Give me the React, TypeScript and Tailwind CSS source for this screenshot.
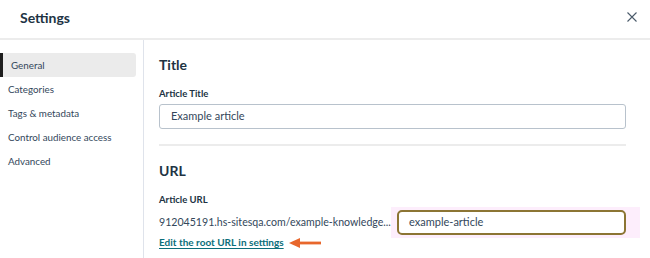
import React from 'react';

const NAV = ['General', 'Categories', 'Tags & metadata', 'Control audience access', 'Advanced'];

const App: React.FC = () => {
  return (
    <div className="w-[650px] h-[258px] overflow-hidden bg-white text-[#33475b] flex flex-col" style={{ fontFamily: 'Lato, "Liberation Sans", sans-serif' }}>
      {/* Header */}
      <header className="h-[40px] shrink-0 flex items-center justify-between pl-[20px] pr-[10px] border-b-2 border-[#ececec]">
        <h1 className="text-[14px] font-bold text-[#213343] -mt-[4px]">Settings</h1>
        <button className="w-[16px] h-[16px] flex items-center justify-center text-[#4a5a6a] -mt-[4px]">
          <svg width="10" height="10" viewBox="0 0 10 10" fill="none" stroke="currentColor" strokeWidth="1.1">
            <path d="M0.5 0.5 L9.5 9.5 M9.5 0.5 L0.5 9.5" />
          </svg>
        </button>
      </header>

      <div className="flex flex-1 min-h-0">
        {/* Sidebar */}
        <nav className="w-[144px] shrink-0 border-r border-[#dfe3eb] pt-[13px] pr-[7px]">
          {NAV.map((item, i) => (
            <div
              key={item}
              className={
                'h-[24px] flex items-center pl-[8px] text-[9.8px] text-[#33475b] ' +
                (i === 0 ? 'bg-[#ebebeb] border-l-[3px] border-[#1d1d1d] pl-[5px] rounded-r-[3px]' : '')
              }
            >
              {item}
            </div>
          ))}
        </nav>

        {/* Content */}
        <main className="flex-1 pl-[15px] pr-[24px] pt-[16px]">
          <h2 className="text-[14px] font-bold text-[#213343] leading-[18px]">Title</h2>
          <label className="block mt-[14px] text-[9.5px] font-bold text-[#213343] leading-[12px]">Article Title</label>
          <div className="mt-[4px] h-[25px] border border-[#b8c2cc] rounded-[3px] flex items-center pl-[11px] text-[11px] text-[#33475b]">
            Example article
          </div>
          <div className="mt-[15px] h-[2px] bg-[#ececec]" />

          <h2 className="mt-[16px] text-[14px] font-bold text-[#213343] leading-[18px]">URL</h2>
          <label className="block mt-[14px] text-[9.5px] font-bold text-[#213343] leading-[12px]">Article URL</label>
          <div className="mt-[4px] flex items-center">
            <span className="w-[232px] shrink-0 text-[10.6px] text-[#33475b] whitespace-nowrap">
              912045191.hs-sitesqa.com/example-knowledge...
            </span>
            <div className="relative flex-1">
              <div className="absolute left-0 -right-[14px] -top-[3px] -bottom-[3px] bg-[#fdeefc]" />
              <div className="relative ml-[6px] h-[25px] border-[2.5px] border-[#8c7534] rounded-[5px] bg-white flex items-center pl-[10px] text-[11px] text-[#33475b]">
                example-article
              </div>
            </div>
          </div>
          <div className="mt-[0px] flex items-center">
            <a className="text-[10px] font-bold text-[#0b6e7a] underline decoration-[#0b6e7a] underline-offset-[2px]">
              Edit the root URL in settings
            </a>
            <svg className="ml-[4px]" width="34" height="12" viewBox="0 0 34 12">
              <path d="M12 4.6 L33 4.6 L33 7.4 L12 7.4 Z" fill="#e8672c" />
              <path d="M1 6 L12 1 L12 11 Z" fill="#e8672c" />
            </svg>
          </div>
        </main>
      </div>
    </div>
  );
};

export default App;
